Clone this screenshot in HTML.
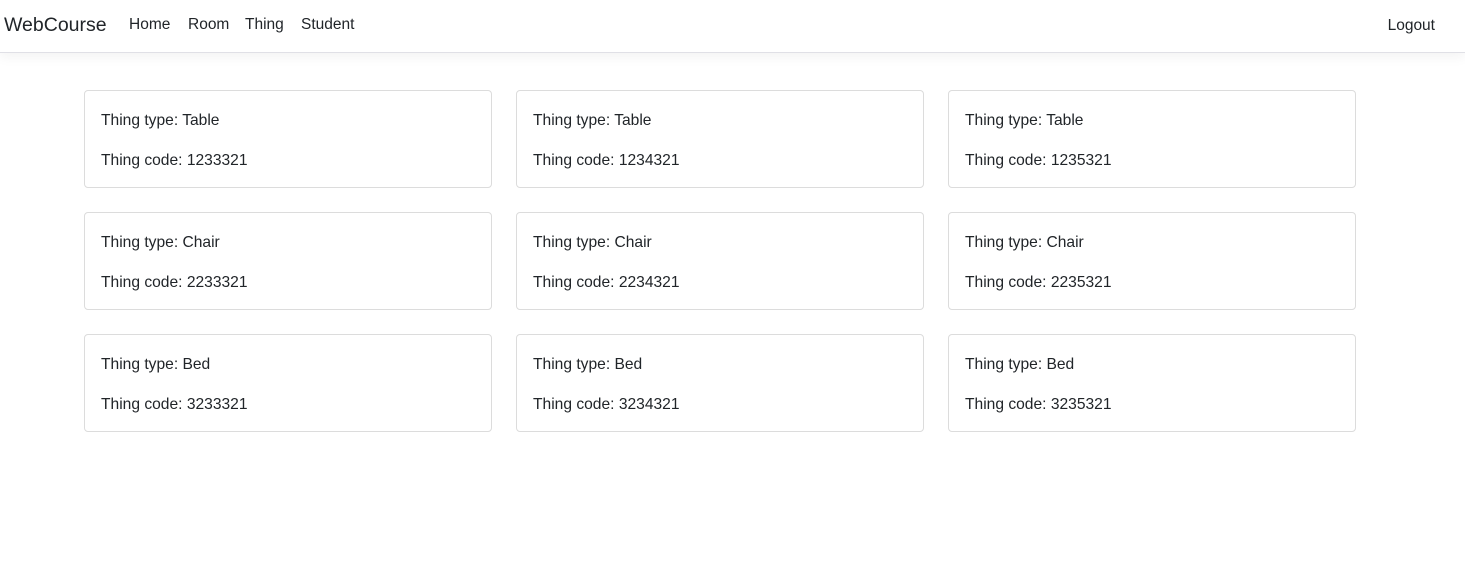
<!DOCTYPE html>
<html><head><style>
body{margin:0;font-family:"Liberation Sans",sans-serif;color:#212529;background:#fff;}
.nav{height:52px;border-bottom:1px solid #e0e0e6;box-shadow:0 4px 12px rgba(0,0,0,0.05);position:relative;}
.brand{position:absolute;left:4px;top:14px;font-size:19.5px;}
.nav .l{position:absolute;top:16px;font-size:15.5px;}
.logout{position:absolute;right:30px;top:17px;font-size:15.5px;}
.card{position:absolute;width:406px;height:96px;border:1px solid #dcdcdc;border-radius:4px;font-size:15.6px;}
.card div{position:absolute;left:16px;}
.a{top:21px}.b{top:61px}
</style></head><body>
<div class="nav"><div class="brand">WebCourse</div><span class="l" style="left:129px">Home</span><span class="l" style="left:188px">Room</span><span class="l" style="left:245px">Thing</span><span class="l" style="left:301px">Student</span><div class="logout">Logout</div></div>
<div class="card" style="left:84px;top:90px"><div class="a">Thing type: Table</div><div class="b">Thing code: 1233321</div></div>
<div class="card" style="left:516px;top:90px"><div class="a">Thing type: Table</div><div class="b">Thing code: 1234321</div></div>
<div class="card" style="left:948px;top:90px"><div class="a">Thing type: Table</div><div class="b">Thing code: 1235321</div></div>
<div class="card" style="left:84px;top:212px"><div class="a">Thing type: Chair</div><div class="b">Thing code: 2233321</div></div>
<div class="card" style="left:516px;top:212px"><div class="a">Thing type: Chair</div><div class="b">Thing code: 2234321</div></div>
<div class="card" style="left:948px;top:212px"><div class="a">Thing type: Chair</div><div class="b">Thing code: 2235321</div></div>
<div class="card" style="left:84px;top:334px"><div class="a">Thing type: Bed</div><div class="b">Thing code: 3233321</div></div>
<div class="card" style="left:516px;top:334px"><div class="a">Thing type: Bed</div><div class="b">Thing code: 3234321</div></div>
<div class="card" style="left:948px;top:334px"><div class="a">Thing type: Bed</div><div class="b">Thing code: 3235321</div></div>
</body></html>
